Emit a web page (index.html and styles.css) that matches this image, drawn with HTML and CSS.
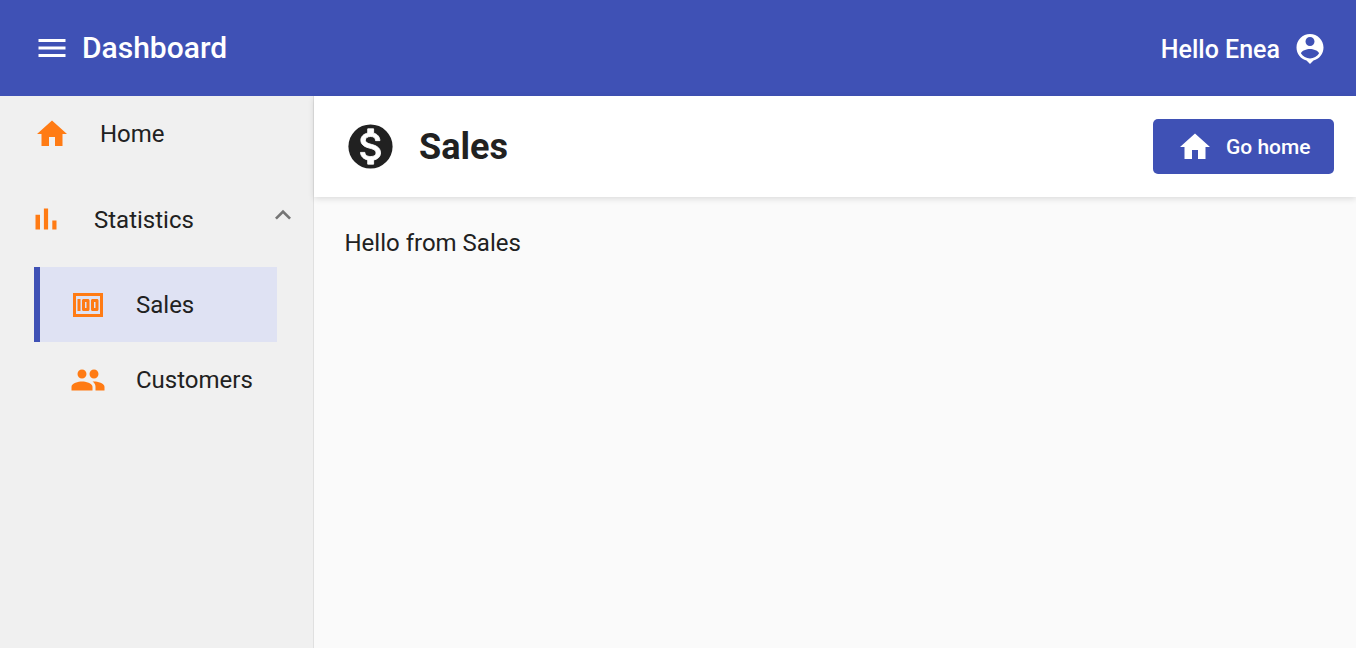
FILE: index.html
```html
<!DOCTYPE html>
<html lang="en">
<head>
    <meta charset="UTF-8">
    <meta name="viewport" content="width=device-width, initial-scale=1.0">
    <title>Dashboard</title>
    <link rel="stylesheet" href="styles.css">
</head>
<body>
    <header class="toolbar">
        <svg class="icon icon-white" viewBox="0 0 24 24"><path d="M3 18h18v-2H3v2zm0-5h18v-2H3v2zm0-7v2h18V6H3z"/></svg>
        <span class="toolbar-title">Dashboard</span>
        <span class="toolbar-user">Hello Enea</span>
        <svg class="icon icon-white user-icon" viewBox="0 0 24 24"><path d="M12 2c-4.97 0-9 4.03-9 9 0 4.17 2.84 7.67 6.69 8.69L12 22l2.31-2.31C18.16 18.67 21 15.17 21 11c0-4.97-4.03-9-9-9zm0 2c1.66 0 3 1.34 3 3s-1.34 3-3 3-3-1.34-3-3 1.34-3 3-3zm0 14.3c-2.5 0-4.71-1.28-6-3.22.03-1.99 4-3.08 6-3.08 1.99 0 5.97 1.09 6 3.08-1.29 1.94-3.5 3.22-6 3.22z"/></svg>
    </header>

    <div class="layout">
        <nav class="sidebar">
            <a class="nav-item nav-home">
                <svg class="icon icon-orange" viewBox="0 0 24 24"><path d="M10 20v-6h4v6h5v-8h3L12 3 2 12h3v8z"/></svg>
                <span>Home</span>
            </a>
            <a class="nav-item nav-group">
                <svg class="icon icon-orange" viewBox="0 0 24 24"><path d="M5 9.2h3V19H5zM10.6 5h2.8v14h-2.8zm5.6 8H19v6h-2.8z"/></svg>
                <span class="nav-group-label">Statistics</span>
                <svg class="chevron" viewBox="0 0 24 24"><path d="M12 8l-6 6 1.41 1.41L12 10.83l4.59 4.58L18 14z"/></svg>
            </a>
            <div class="sub-list">
                <a class="nav-item sub-item active">
                    <svg class="icon icon-orange" viewBox="0 0 24 24"><path d="M5 8h2v8H5zm7 0H9c-.55 0-1 .45-1 1v6c0 .55.45 1 1 1h3c.55 0 1-.45 1-1V9c0-.55-.45-1-1-1zm-1 6h-1v-4h1v4zm7-6h-3c-.55 0-1 .45-1 1v6c0 .55.45 1 1 1h3c.55 0 1-.45 1-1V9c0-.55-.45-1-1-1zm-1 6h-1v-4h1v4z"/><path d="M2 4v16h20V4H2zm2 14V6h16v12H4z"/></svg>
                    <span>Sales</span>
                </a>
                <a class="nav-item sub-item">
                    <svg class="icon icon-orange" viewBox="0 0 24 24"><path d="M16 11c1.66 0 2.99-1.34 2.99-3S17.66 5 16 5c-1.66 0-3 1.34-3 3s1.34 3 3 3zm-8 0c1.66 0 2.99-1.34 2.99-3S9.66 5 8 5C6.34 5 5 6.34 5 8s1.34 3 3 3zm0 2c-2.33 0-7 1.17-7 3.5V19h14v-2.5c0-2.33-4.67-3.5-7-3.5zm8 0c-.29 0-.62.02-.97.05 1.16.84 1.97 1.97 1.97 3.45V19h6v-2.5c0-2.33-4.67-3.5-7-3.5z"/></svg>
                    <span>Customers</span>
                </a>
            </div>
        </nav>

        <main class="content">
            <div class="page-header">
                <svg class="page-icon" viewBox="0 0 24 24">
                    <circle cx="12" cy="12" r="10"/>
                    <path class="page-icon-dollar" d="M13.41 18.09V20h-2.67v-1.93c-1.71-.36-3.16-1.46-3.27-3.4h1.96c.1 1.05.82 1.87 2.65 1.87 1.96 0 2.4-.98 2.4-1.59 0-.83-.44-1.61-2.67-2.14-2.48-.6-4.18-1.62-4.18-3.67 0-1.72 1.39-2.84 3.11-3.21V4h2.67v1.95c1.86.45 2.79 1.86 2.85 3.39H14.3c-.05-1.11-.64-1.87-2.22-1.87-1.5 0-2.4.68-2.4 1.64 0 .84.65 1.39 2.67 1.91s4.18 1.39 4.18 3.91c-.01 1.83-1.38 2.83-3.12 3.16z"/>
                </svg>
                <h1 class="page-title">Sales</h1>
                <button class="home-button" type="button">
                    <svg class="icon icon-white" viewBox="0 0 24 24"><path d="M10 20v-6h4v6h5v-8h3L12 3 2 12h3v8z"/></svg>
                    Go home
                </button>
            </div>
            <p class="page-body">Hello from Sales</p>
        </main>
    </div>
</body>
</html>
```

FILE: styles.css
```css
* {
    box-sizing: border-box;
}
body {
    margin: 0;
    height: 100vh;
    overflow: hidden;
    display: flex;
    flex-direction: column;
    font-family: Roboto, "Liberation Sans", sans-serif;
    font-size: 24px;
    color: #212121;
}
.icon {
    width: 36px;
    height: 36px;
    flex-shrink: 0;
    fill: currentColor;
}
.icon-white {
    color: #fff;
}
.icon-orange {
    color: #ff7b14;
}

/* Top bar */
.toolbar {
    height: 96px;
    flex-shrink: 0;
    display: flex;
    align-items: center;
    padding: 0 28px 0 34px;
    background-color: #3f51b5;
    color: #fff;
}
.toolbar-title {
    margin-left: 12px;
    margin-bottom: 2px;
    font-size: 30px;
    font-weight: 500;
}
.toolbar-user {
    margin-left: auto;
    margin-right: 12px;
    padding-top: 2px;
    font-size: 25px;
    font-weight: 500;
}
.user-icon {
    margin-top: 2px;
}

.layout {
    flex: 1;
    display: flex;
    min-height: 0;
}

/* Sidebar */
.sidebar {
    width: 314px;
    flex-shrink: 0;
    background-color: #f0f0f0;
    border-right: 1px solid #e0e0e0;
}
.nav-item {
    display: flex;
    align-items: center;
    gap: 30px;
}
.nav-home {
    height: 75px;
    padding-left: 34px;
}
.nav-group {
    height: 96px;
    padding-left: 28px;
}
.nav-group-label {
    padding-top: 2px;
}
.chevron {
    width: 32px;
    height: 32px;
    margin-left: auto;
    margin-right: 14px;
    margin-bottom: 8px;
    fill: #757575;
}
.sub-list {
    margin-left: 34px;
    width: 243px;
}
.sub-item {
    height: 75px;
    padding-left: 36px;
}
.sub-item.active {
    padding-left: 30px;
    border-left: 6px solid #3f51b5;
    background-color: #dfe2f3;
}

/* Page */
.content {
    flex: 1;
    background-color: #fafafa;
}
.page-header {
    height: 101px;
    display: flex;
    align-items: center;
    padding: 0 22px 0 30px;
    background-color: #fff;
    box-shadow: 0 2px 6px rgba(0, 0, 0, 0.12);
}
.page-icon {
    width: 53px;
    height: 53px;
    fill: #212121;
}
.page-icon-dollar {
    fill: #fff;
    stroke: #fff;
    stroke-width: 0.4;
}
.page-title {
    margin: 0 0 0 22px;
    font-size: 36px;
    font-weight: 700;
}
.home-button {
    margin-left: auto;
    height: 55px;
    width: 181px;
    display: flex;
    align-items: center;
    gap: 13px;
    padding: 0 0 0 24px;
    border: none;
    border-radius: 5px;
    background-color: #3f51b5;
    color: #fff;
    font-family: inherit;
    font-size: 21px;
    font-weight: 500;
}
.page-body {
    margin: 0;
    padding: 32px 30.5px;
    line-height: 28px;
}
```
